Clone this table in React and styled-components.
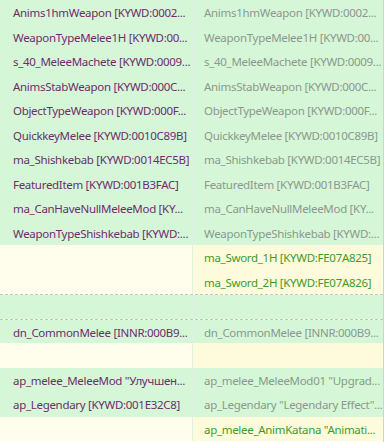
import React from 'react';
import styled, { createGlobalStyle } from 'styled-components';

const GlobalStyle = createGlobalStyle`
    html, body {
        margin: 0;
        padding: 0;
        background: #ffffff;
    }
    body {
        font-family: "Noto Sans", "Open Sans", sans-serif;
    }
`;

const Grid = styled.div`
    width: 383px;
    height: 442px;
    overflow: hidden;
    border-right: 1px solid #c9d6c9;
    display: flex;
    flex-direction: column;
`;

const Row = styled.div`
    display: grid;
    grid-template-columns: 192px 1fr;
    height: 24.5px;
    flex: none;
    border-top: ${p => (p.$dotted ? '1px dashed #bfc7bf' : 'none')};
    box-sizing: border-box;
`;

const bg = {
    green: '#d5f7d8',
    pale: '#fffdeb',
    yellow: '#fdfbdb',
};

const ink = {
    left: '#6f2b6c',
    right: '#8c988c',
    new: '#3f9a2f',
};

const Cell = styled.div`
    background: ${p => bg[p.$tone]};
    color: ${p => ink[p.$ink] || '#000'};
    font-size: 11.5px;
    letter-spacing: -0.3px;
    line-height: 25px;
    padding-left: ${p => (p.$side === 'right' ? '11px' : '13px')};
    white-space: nowrap;
    overflow: hidden;
    border-left: ${p => (p.$side === 'right' ? '1px solid #e2f0e2' : 'none')};
`;

const rows = [
    ['Anims1hmWeapon [KYWD:0002...', 'Anims1hmWeapon [KYWD:0002...'],
    ['WeaponTypeMelee1H [KYWD:00...', 'WeaponTypeMelee1H [KYWD:00...'],
    ['s_40_MeleeMachete [KYWD:0009...', 's_40_MeleeMachete [KYWD:0009...'],
    ['AnimsStabWeapon [KYWD:000C...', 'AnimsStabWeapon [KYWD:000C...'],
    ['ObjectTypeWeapon [KYWD:000F...', 'ObjectTypeWeapon [KYWD:000F...'],
    ['QuickkeyMelee [KYWD:0010C89B]', 'QuickkeyMelee [KYWD:0010C89B]'],
    ['ma_Shishkebab [KYWD:0014EC5B]', 'ma_Shishkebab [KYWD:0014EC5B]'],
    ['FeaturedItem [KYWD:001B3FAC]', 'FeaturedItem [KYWD:001B3FAC]'],
    ['ma_CanHaveNullMeleeMod [KY...', 'ma_CanHaveNullMeleeMod [KY...'],
    ['WeaponTypeShishkebab [KYWD:...', 'WeaponTypeShishkebab [KYWD:...'],
    ['', 'ma_Sword_1H [KYWD:FE07A825]', 'added'],
    ['', 'ma_Sword_2H [KYWD:FE07A826]', 'added'],
    ['', '', 'same', true],
    ['dn_CommonMelee [INNR:000B9...', 'dn_CommonMelee [INNR:000B9...', 'same', true],
    ['', '', 'blank'],
    ['ap_melee_MeleeMod "Улучшен...', 'ap_melee_MeleeMod01 "Upgrad...'],
    ['ap_Legendary [KYWD:001E32C8]', 'ap_Legendary "Legendary Effect"...'],
    ['', 'ap_melee_AnimKatana "Animati...', 'added'],
];

export default function App() {
    return (
        <>
            <GlobalStyle />
            <Grid>
                {rows.map(([left, right, kind, dotted], i) => {
                    if (kind === 'added') {
                        return (
                            <Row key={i} $dotted={dotted}>
                                <Cell $tone="pale" $side="left" />
                                <Cell $tone="yellow" $side="right" $ink="new">{right}</Cell>
                            </Row>
                        );
                    }
                    if (kind === 'blank') {
                        return (
                            <Row key={i} $dotted={dotted}>
                                <Cell $tone="pale" $side="left" />
                                <Cell $tone="yellow" $side="right" />
                            </Row>
                        );
                    }
                    return (
                        <Row key={i} $dotted={dotted}>
                            <Cell $tone="green" $side="left" $ink="left">{left}</Cell>
                            <Cell $tone="green" $side="right" $ink="right">{right}</Cell>
                        </Row>
                    );
                })}
            </Grid>
        </>
    );
}
